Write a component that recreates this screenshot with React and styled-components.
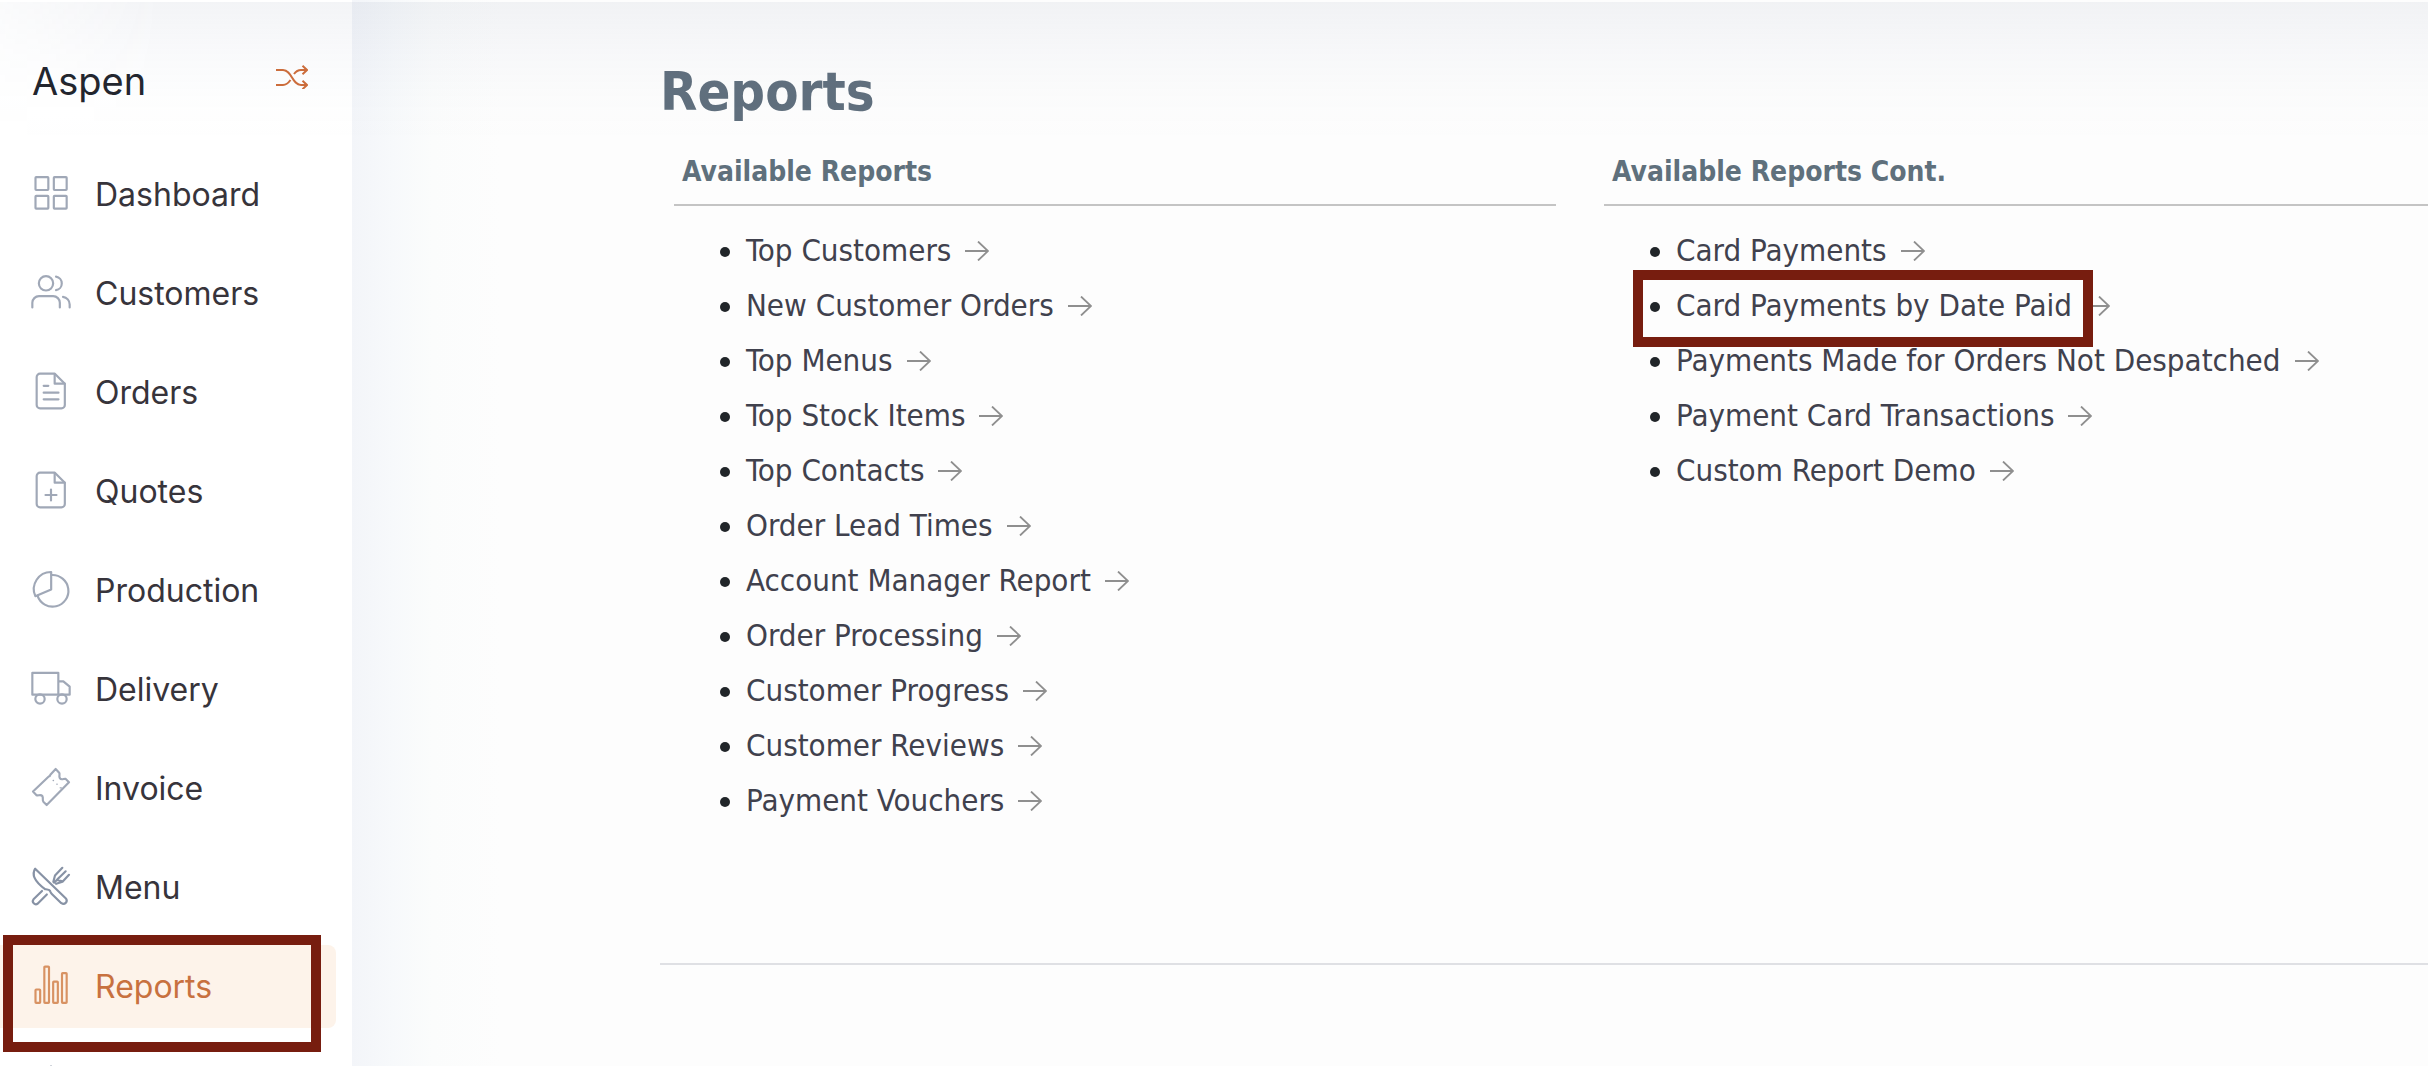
import React from "react"
import styled, { createGlobalStyle } from "styled-components"

const GlobalStyle = createGlobalStyle`
  * {
    box-sizing: border-box;
  }

  body {
    margin: 0;
    background: #fdfdfd;
    overflow: hidden;
  }
`

const navItems = [
  { label: "Dashboard", icon: "dashboard" },
  { label: "Customers", icon: "customers" },
  { label: "Orders", icon: "orders" },
  { label: "Quotes", icon: "quotes" },
  { label: "Production", icon: "production" },
  { label: "Delivery", icon: "delivery" },
  { label: "Invoice", icon: "invoice" },
  { label: "Menu", icon: "menu" },
  { label: "Reports", icon: "reports", active: true },
]

const reports = [
  "Top Customers",
  "New Customer Orders",
  "Top Menus",
  "Top Stock Items",
  "Top Contacts",
  "Order Lead Times",
  "Account Manager Report",
  "Order Processing",
  "Customer Progress",
  "Customer Reviews",
  "Payment Vouchers",
]

const moreReports = [
  "Card Payments",
  "Card Payments by Date Paid",
  "Payments Made for Orders Not Despatched",
  "Payment Card Transactions",
  "Custom Report Demo",
]

const icons = {
  dashboard: (
    <>
      <rect x="2.7" y="2.5" width="7.7" height="7.7" rx="0.4" />
      <rect x="13.7" y="2.5" width="7.7" height="7.7" rx="0.4" />
      <rect x="2.7" y="13.7" width="7.7" height="7.7" rx="0.4" />
      <rect x="13.7" y="13.7" width="7.7" height="7.7" rx="0.4" />
    </>
  ),
  customers: (
    <>
      <circle cx="9" cy="6.8" r="4.3" />
      <path d="M.8 21.3v-2.8a4 4 0 0 1 4-4h8.5a4 4 0 0 1 4 4v2.8" />
      <path d="M15 2.8a4.1 4.1 0 0 1 0 8.1M19.2 14.9a4.6 4.6 0 0 1 4 4.6v1.8" />
    </>
  ),
  orders: (
    <>
      <path d="M14.3 1.6H5.4a2 2 0 0 0-2 2v16.8a2 2 0 0 0 2 2h12.9a2 2 0 0 0 2-2V7.6z" />
      <path d="M14.2 1.8v5.8h6M7.6 8.9h2.8M7.6 13h8.9M7.6 17h8.9" />
    </>
  ),
  quotes: (
    <>
      <path d="M14.3 1.6H5.4a2 2 0 0 0-2 2v16.8a2 2 0 0 0 2 2h12.9a2 2 0 0 0 2-2V7.6z" />
      <path d="M14.2 1.8v5.8h6M12 11.7v6.6M8.7 15h6.6" />
    </>
  ),
  production: (
    <>
      <path d="M12.1 12.3V1.8A10.3 10.3 0 0 0 2.6 16.3z" />
      <path d="M12.4 3.6A9.5 9.5 0 1 1 3.9 16" />
    </>
  ),
  delivery: (
    <>
      <path d="M.8 2.9h15.6V16H.8zM16.4 8h3l3.8 3.2V16h-6.8" />
      <circle cx="5.4" cy="18.6" r="2.8" />
      <circle cx="18.6" cy="18.6" r="2.8" />
    </>
  ),
  invoice: (
    <>
      <path d="M14.8 1.2 16.9 3.4C17.6 4.4 16.5 5.4 17.3 6.7 18.2 8.2 19.8 6.8 20.7 7.1L22.8 9.1 9.4 22.8 7.4 20.8C6.6 19.8 7.6 18.9 6.8 17.4 5.8 16.2 4.4 17.4 3.3 16.9L1.2 14.7 10.8 5.6C11.6 5.6 11.4 5 11.6 4.6z" />
      <path d="M13.3 8.1h.2M15.5 10.3h.2M17.5 12.5h.7" strokeWidth="0.8" />
    </>
  ),
  menu: (
    <>
      <path d="M2.5 1.6C.2 5.2 2.6 9.6 8.4 13.9c1.6.2 3 .2 3.2 1.4.2.8.4 1 .9 1.5l5.7 5.5c2 1.2 4-.8 2.9-2.6z" />
      <path d="M6.6 15 1.5 20c-1.3 1.7.8 3.8 2.6 2.5l5.4-5.4" />
      <path d="M18.8 1.1 14.4 5.7 13.4 9.5M20.8 3.2l-5.2 5M22.8 5.3l-3.9 4.2-3.8 1.2M16.9 6.9l-3 3.1M18.9 9.2l-3-.8" />
    </>
  ),
  reports: (
    <>
      <rect x="2.7" y="14.7" width="2.8" height="8" rx="0.4" />
      <rect x="8" y="1" width="2.8" height="21.7" rx="0.4" />
      <rect x="13.3" y="10" width="2.8" height="12.7" rx="0.4" />
      <rect x="18.6" y="4.9" width="2.8" height="17.8" rx="0.4" />
    </>
  ),
  settings: (
    <>
      <path d="M12 1.4 14.3 4.400l4-.8.9 4 3.7 1.700L21 12l1.9 3.1-3.7 1.7-.9 4-4-.8-2.3 2.600L9.7 20l-4 .8-.9-4-3.7-1.7L3 12 1.100 9.300l3.700-1.700.9-4 4 .8z" />
      <circle cx="12" cy="12" r="4" />
    </>
  ),
}

const NavIcon = ({ name }) => (
  <Icon viewBox="0 0 24 24" $name={name} aria-hidden="true">
    {icons[name]}
  </Icon>
)

const ReportList = ({ items, marked }) => (
  <List>
    {items.map(item => (
      <Item key={item}>
        <ReportLink href="#">
          {item}
          <Arrow viewBox="0 0 24 20" aria-hidden="true">
            <path d="M0 10h23M13 .5l10 9.5-10 9.5" />
          </Arrow>
        </ReportLink>
        {item === marked && <ItemMark />}
      </Item>
    ))}
  </List>
)

const App = () => {
  return (
    <Page>
      <GlobalStyle />
      <Sidebar>
        <Brand>
          <BrandName>Aspen</BrandName>
          <SwitchButton aria-label="Switch">
            <svg width="32" height="24" viewBox="0 0 32 24" fill="none" stroke="currentColor" strokeWidth="2">
              <path d="M0 5h7c9 0 9 15 18 15h6M0 20h7c3.5 0 5.5-2.2 7.5-5M18 9c2-2.7 4-4 7-4h6" />
              <path d="M26.5.8 31 5l-4.5 4.200M26.5 15.8 31 20l-4.5 4.2" />
            </svg>
          </SwitchButton>
        </Brand>
        <Nav>
          {navItems.map(({ label, icon, active }) => (
            <NavLink href="#" key={label} $active={active}>
              <NavIcon name={icon} />
              {label}
              {active && <NavMark />}
            </NavLink>
          ))}
          <NavLink href="#">
            <NavIcon name="settings" />
          </NavLink>
        </Nav>
      </Sidebar>
      <Main>
        <Title>Reports</Title>
        <Columns>
          <section>
            <Heading>Available Reports</Heading>
            <ReportList items={reports} />
          </section>
          <section>
            <Heading>Available Reports Cont.</Heading>
            <ReportList items={moreReports} marked="Card Payments by Date Paid" />
          </section>
        </Columns>
        <Divider />
      </Main>
      <TopShade />
    </Page>
  )
}

const Page = styled.div`
  position: relative;
  display: flex;
  height: 100vh;
  overflow: hidden;
`

const TopShade = styled.div`
  position: absolute;
  top: 2px;
  left: 0;
  right: 0;
  height: 140px;
  pointer-events: none;
  background: linear-gradient(rgba(100, 115, 145, 0.08), rgba(100, 115, 160, 0.04) 35%, rgba(100, 130, 145, 0.01) 70%, rgba(100, 115, 145, 0));
  mask-image: linear-gradient(to right, rgba(0, 0, 0, 0.4), #000 160px);
`

const Sidebar = styled.aside`
  flex: 0 0 352px;
  background: #fff;
  font-family: Inter, sans-serif;
`

const Brand = styled.div`
  display: flex;
  align-items: center;
  justify-content: space-between;
  height: 153px;
  padding: 8px 44px 0 32px;
`

const BrandName = styled.div`
  font-size: 38px;
  line-height: 48px;
  color: #22252d;
`

const SwitchButton = styled.button`
  display: flex;
  padding: 0 0 8px;
  border: 0;
  background: none;
  color: #cf6d3a;
  cursor: pointer;
`

const Nav = styled.nav`
  display: flex;
  flex-direction: column;
  gap: 16px;
`

const NavLink = styled.a`
  position: relative;
  display: flex;
  align-items: center;
  gap: 24px;
  height: 83px;
  margin-right: 16px;
  padding-left: 31px;
  border-radius: 0 8px 8px 0;
  background: ${props => (props.$active ? "#fdf3ea" : "transparent")};
  color: ${props => (props.$active ? "#c8713f" : "#37343b")};
  font-size: 32px;
  line-height: 40px;
  text-decoration: none;
`

const iconColors = {
  menu: "#8792a5",
  reports: "#d89263",
}

const Icon = styled.svg`
  flex: none;
  width: 40px;
  height: 40px;
  margin-bottom: 4px;
  overflow: visible;
  fill: none;
  stroke: ${props => iconColors[props.$name] || "#a0a8b7"};
  stroke-width: 1.3;
  stroke-linecap: round;
  stroke-linejoin: round;
`

const Mark = styled.span`
  position: absolute;
  border: 10px solid #771d0f;
  pointer-events: none;
`

const NavMark = styled(Mark)`
  top: -10px;
  left: 3px;
  right: 15px;
  bottom: -24px;
`

const Main = styled.main`
  flex: 1;
  min-width: 0;
  padding: 56px 0 0 308px;
  overflow: hidden;
  background: linear-gradient(to right, #f3f5f9, #f7f9fb 40px, #fbfcfc 80px, #fdfdfd 150px);
  font-family: "DejaVu Sans Condensed", Tahoma, sans-serif;
`

const Title = styled.h1`
  margin: 0;
  font-size: 54px;
  line-height: 72px;
  color: #606f7d;
`

const Columns = styled.div`
  display: grid;
  grid-template-columns: 1fr 1fr;
  gap: 48px;
  margin: 24px -58px 0 14px;
`

const Heading = styled.h2`
  margin: 0;
  padding: 0 8px 12px;
  border-bottom: 2px solid #c4c4c4;
  font-size: 28px;
  line-height: 40px;
  color: #5f707c;
`

const List = styled.ul`
  margin: 17px 0 0;
  padding: 0 0 0 72px;
  font-size: 31px;
  line-height: 55px;
  color: #212529;
`

const Item = styled.li`
  position: relative;
`

const ReportLink = styled.a`
  color: #40414d;
  text-decoration: none;
`

const Arrow = styled.svg`
  width: 24px;
  height: 20px;
  margin-left: 14px;
  fill: none;
  stroke: #8f8f8f;
  stroke-width: 1.8;
`

const ItemMark = styled(Mark)`
  top: -8px;
  left: -43px;
  width: 460px;
  height: 77px;
`

const Divider = styled.hr`
  margin: 135px 0 0;
  border: 0;
  border-top: 2px solid #dfe0e4;
`

export default App
